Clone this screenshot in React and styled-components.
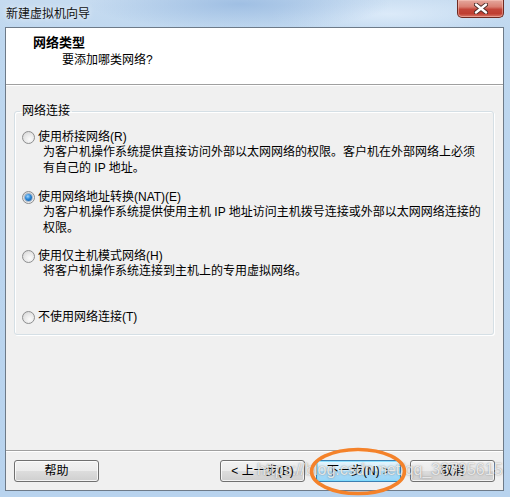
import React from 'react';
import styled, { createGlobalStyle } from 'styled-components';

const GlobalStyle = createGlobalStyle`
  html, body {
    margin: 0;
    padding: 0;
    overflow: hidden;
  }
  body {
    font-family: "Liberation Sans", "Noto Sans CJK SC", sans-serif;
    font-size: 12px;
    color: #000;
  }
`

const Frame = styled.div`
  position: relative;
  width: 510px;
  height: 497px;
  display: flex;
  flex-direction: column;
  background:
    radial-gradient(ellipse 150px 26px at 240px 4px, rgba(150, 184, 224, 0.8), rgba(150, 184, 224, 0)),
    radial-gradient(ellipse 120px 20px at 390px 14px, rgba(222, 236, 250, 0.9), rgba(222, 236, 250, 0)),
    linear-gradient(180deg, #c6dbf0 0%, #bed7ef 40px, #b8d3ee 100%);
`

const TitleBar = styled.div`
  height: 27px;
  display: flex;
  align-items: flex-start;
  padding: 0 6px;
`

const TitleText = styled.div`
  margin-top: 5px;
  font-family: "Noto Sans CJK SC", sans-serif;
  font-size: 12px;
  line-height: 16px;
  color: #111;
  text-shadow: 0 0 6px rgba(255, 255, 255, 0.9);
`

const CloseBtn = styled.div`
  margin-left: auto;
  width: 47px;
  height: 18px;
  box-sizing: border-box;
  border: 1px solid #6e2a22;
  border-top: none;
  border-radius: 0 0 5px 5px;
  background: linear-gradient(180deg, #e5a89e 0%, #d97f72 40%, #c3463a 55%, #bf3e31 80%, #d9786a 100%);
  box-shadow: inset 0 0 0 1px rgba(255, 210, 200, 0.45);
  display: flex;
  align-items: center;
  justify-content: center;
`

const Client = styled.div`
  flex: 1;
  margin: 0 6px 6px 5px;
  border: 1px solid #6d7a88;
  background: #f0f0f0;
  display: flex;
  flex-direction: column;
`

const Header = styled.div`
  height: 56px;
  box-sizing: border-box;
  background: #fff;
  padding: 6px 0 0 27px;
`

const HeaderTitle = styled.div`
  font-family: "Noto Sans CJK SC", sans-serif;
  font-weight: bold;
  font-size: 13px;
  line-height: 16px;
`

const HeaderSub = styled.div`
  margin: 2px 0 0 29px;
  line-height: 16px;
`

const Divider = styled.div`
  height: 1px;
  background: #a0a0a0;
  border-bottom: 1px solid #fff;
`

const Body = styled.div`
  flex: 1;
  padding: 17px 9px 0 8px;
`

const GroupBox = styled.fieldset`
  margin: 0;
  padding: 0;
  min-width: 0;
  border: 1px solid #d5dfe5;
  border-radius: 3px;
  box-shadow: inset 1px 1px 0 #fff, 1px 1px 0 #fff;
`

const Legend = styled.legend`
  margin-left: 5px;
  padding: 0 2px;
  line-height: 16px;
`

const OptionList = styled.div`
  display: flex;
  flex-direction: column;
  padding: 11px 0 10px 7px;
`

const Option = styled.div`
  margin-top: ${props => props.$gap || 0}px;
`

const OptionRow = styled.div`
  display: flex;
  align-items: center;
  height: 14px;
  line-height: 14px;
`

const Radio = styled.span`
  width: 13px;
  height: 13px;
  box-sizing: border-box;
  border-radius: 50%;
  border: 1px solid #8d8e8f;
  background: radial-gradient(circle at 60% 65%, #fbfbfb 0%, #e6e6e6 55%, #cfcfcf 100%);
  margin-right: 3px;
  display: flex;
  align-items: center;
  justify-content: center;
  flex-shrink: 0;

  &::after {
    content: '';
    display: ${props => props.$checked ? 'block' : 'none'};
    width: 7px;
    height: 7px;
    border-radius: 50%;
    background: radial-gradient(circle at 40% 35%, #9fd6ff 0%, #2a86d6 45%, #0d4c8e 100%);
    box-shadow: 0 0 0 1px rgba(30, 80, 140, 0.35);
  }
`

const Desc = styled.div`
  padding-left: 21px;
  line-height: 16px;
`

const Footer = styled.div`
  height: 38px;
  box-sizing: border-box;
  padding: 0 8px;
  display: flex;
  align-items: center;
`

const Spacer = styled.div`
  flex: 1;
`

const Button = styled.div`
  width: 85px;
  height: 22px;
  box-sizing: border-box;
  margin-left: ${props => props.$gap || 0}px;
  border: 1px solid ${props => props.$default ? '#3c7fb1' : '#707070'};
  border-radius: 3px;
  background: ${props => props.$default
    ? 'linear-gradient(180deg, #e5f5fd 0%, #d3eefc 50%, #b0e0fb 50%, #97d4f6 100%)'
    : 'linear-gradient(180deg, #f2f2f2 0%, #ebebeb 50%, #dddddd 50%, #cfcfcf 100%)'};
  box-shadow: inset 0 0 0 1px ${props => props.$default ? 'rgba(120, 220, 255, 0.8)' : 'rgba(255, 255, 255, 0.75)'};
  display: flex;
  align-items: center;
  justify-content: center;
  line-height: 16px;
`

// csdn watermark stamped over the screenshot
const Watermark = styled.div`
  position: absolute;
  left: 257px;
  top: 461px;
  font-family: "Liberation Sans", sans-serif;
  font-size: 16px;
  line-height: 18px;
  color: rgba(255, 255, 255, 0.8);
  text-shadow: 0 0 1px rgba(70, 70, 70, 0.55), 0 0 3px rgba(90, 90, 90, 0.3);
  white-space: nowrap;
  pointer-events: none;
`

const Ring = styled.svg`
  position: absolute;
  left: 308px;
  top: 446px;
  pointer-events: none;
`

const CloseIcon = () => (
  <svg width="14" height="11" viewBox="0 0 14 11">
    <path d="M2 1.5 L12 9.5 M12 1.5 L2 9.5" stroke="#4a2a26" strokeWidth="4.2" strokeLinecap="round" />
    <path d="M2 1.5 L12 9.5 M12 1.5 L2 9.5" stroke="#fff" strokeWidth="2.4" strokeLinecap="round" />
  </svg>
)

const options = [
  { label: '使用桥接网络(R)', gap: 0, desc: ['为客户机操作系统提供直接访问外部以太网网络的权限。客户机在外部网络上必须', '有自己的 IP 地址。'] },
  { label: '使用网络地址转换(NAT)(E)', gap: 14, checked: true, desc: ['为客户机操作系统提供使用主机 IP 地址访问主机拨号连接或外部以太网网络连接的', '权限。'] },
  { label: '使用仅主机模式网络(H)', gap: 13, desc: ['将客户机操作系统连接到主机上的专用虚拟网络。'] },
  { label: '不使用网络连接(T)', gap: 31, desc: [] },
]

export default function App() {
  return (
    <Frame>
      <GlobalStyle />
      <TitleBar>
        <TitleText>新建虚拟机向导</TitleText>
        <CloseBtn><CloseIcon /></CloseBtn>
      </TitleBar>
      <Client>
        <Header>
          <HeaderTitle>网络类型</HeaderTitle>
          <HeaderSub>要添加哪类网络?</HeaderSub>
        </Header>
        <Divider />
        <Body>
          <GroupBox>
            <Legend>网络连接</Legend>
            <OptionList>
              {options.map(opt =>
                <Option key={opt.label} $gap={opt.gap}>
                  <OptionRow>
                    <Radio $checked={opt.checked} />
                    {opt.label}
                  </OptionRow>
                  {opt.desc.map(line => <Desc key={line}>{line}</Desc>)}
                </Option>
              )}
            </OptionList>
          </GroupBox>
        </Body>
        <Divider />
        <Footer>
          <Button>帮助</Button>
          <Spacer />
          <Button>&lt; 上一步(B)</Button>
          <Button $gap={11} $default>下一步(N) &gt;</Button>
          <Button $gap={9}>取消</Button>
        </Footer>
      </Client>
      <Watermark>https://blog.csdn.net/qq_38795615</Watermark>
      <Ring width="100" height="51" viewBox="0 0 100 51">
        <ellipse cx="50" cy="25.5" rx="46.5" ry="22" fill="none" stroke="#f4822a" strokeWidth="3.5" />
      </Ring>
    </Frame>
  );
}
